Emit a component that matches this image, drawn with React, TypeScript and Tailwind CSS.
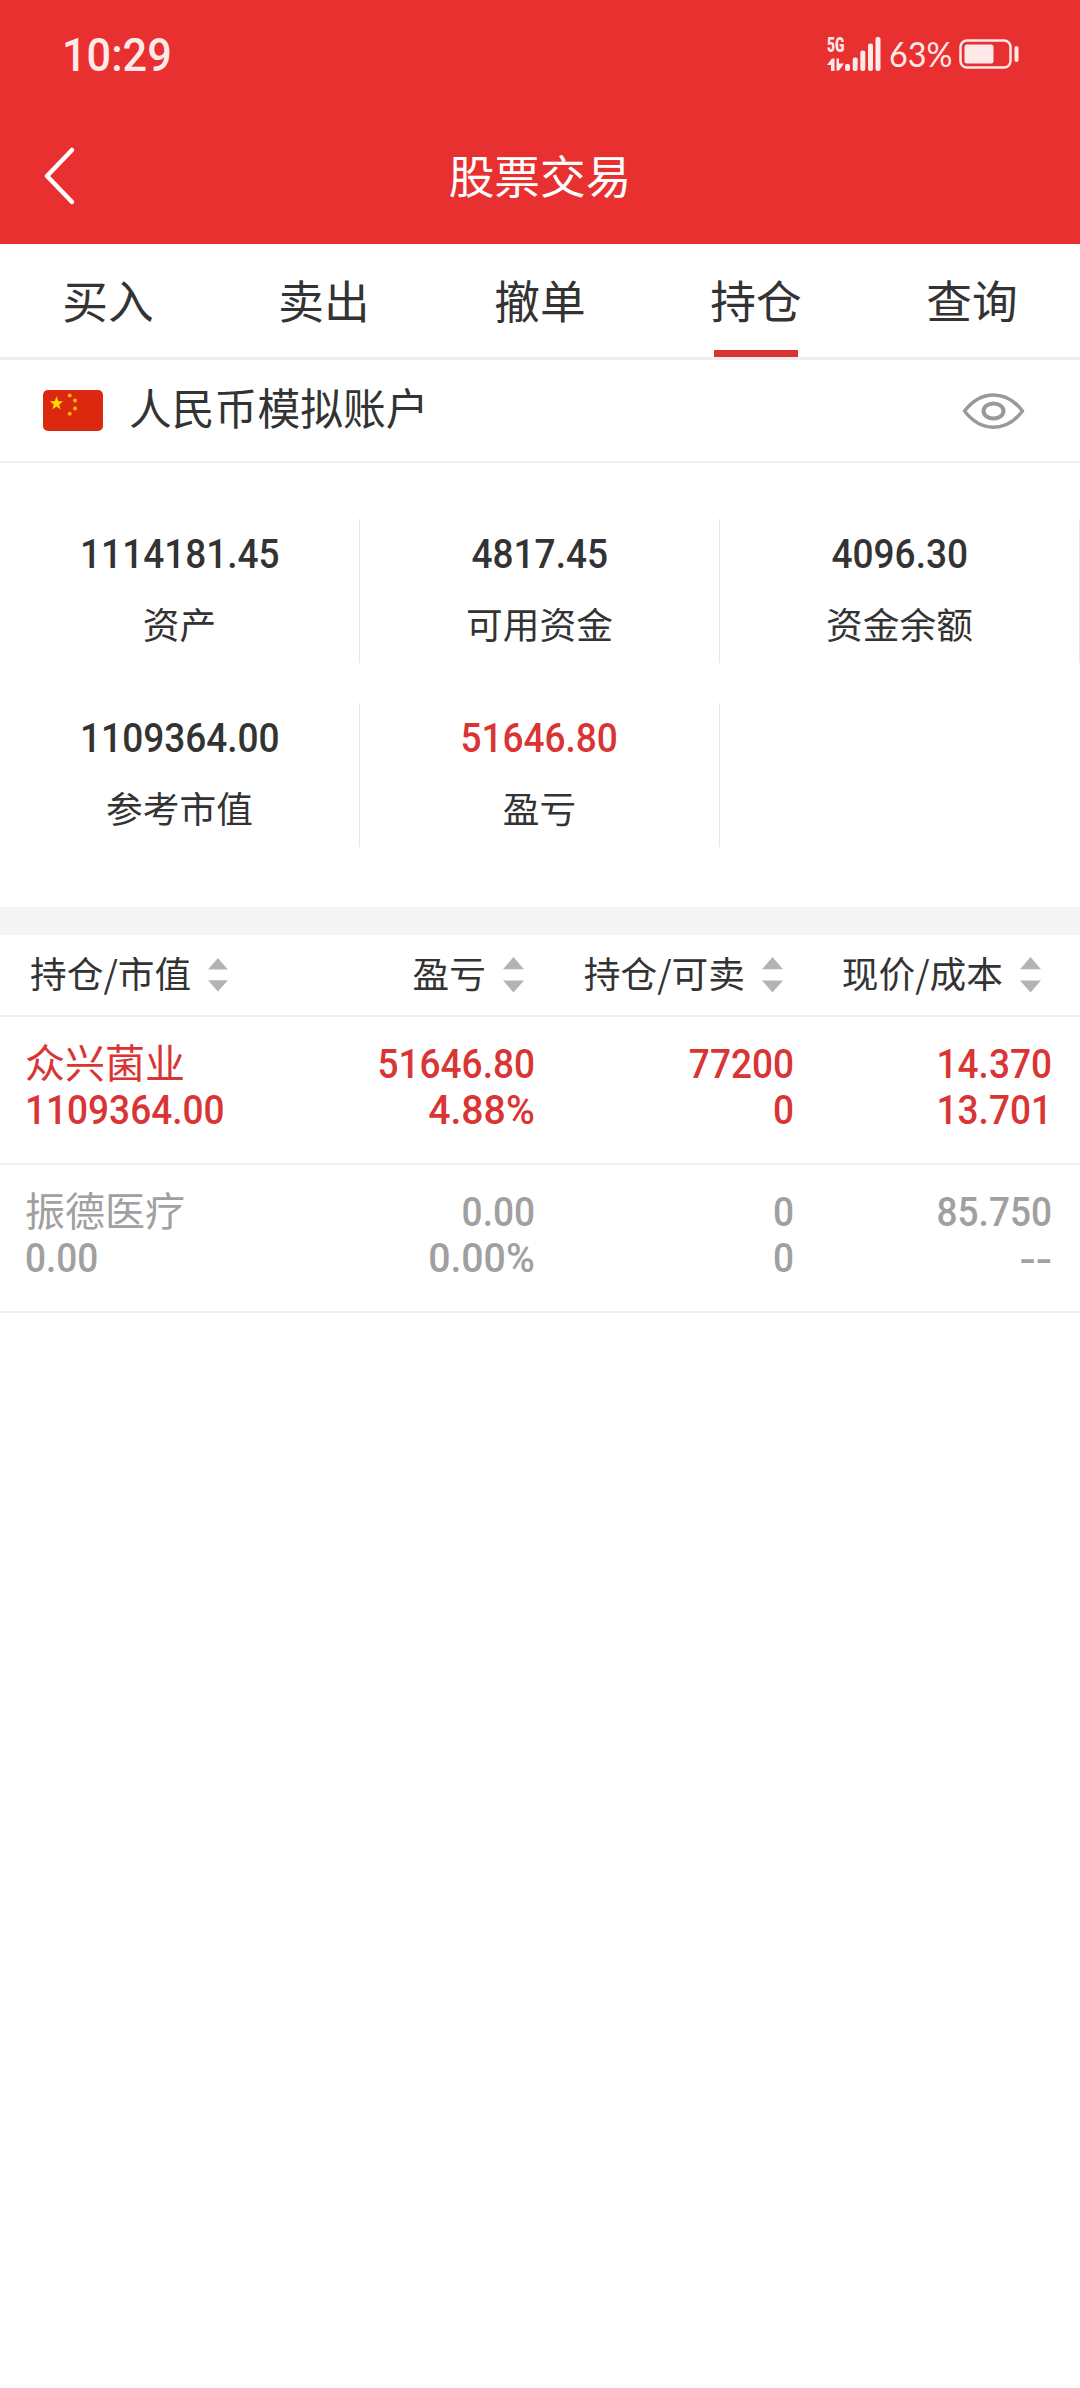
const tabs = ["买入", "卖出", "撤单", "持仓", "查询"];

const summary = [
  { value: "1114181.45", label: "资产" },
  { value: "4817.45", label: "可用资金" },
  { value: "4096.30", label: "资金余额" },
  { value: "1109364.00", label: "参考市值" },
  { value: "51646.80", label: "盈亏", up: true },
];

const columns = [
  { title: "持仓/市值", className: "w-[228px] pl-[30px] justify-between" },
  { title: "盈亏", className: "w-[296px] justify-end" },
  { title: "持仓/可卖", className: "w-[259px] justify-end" },
  { title: "现价/成本", className: "w-[258px] justify-end" },
];

const holdings = [
  { name: "众兴菌业", value: "1109364.00", profit: "51646.80", rate: "4.88%", amount: "77200", sellable: "0", price: "14.370", cost: "13.701", color: "text-[#d93535]" },
  { name: "振德医疗", value: "0.00", profit: "0.00", rate: "0.00%", amount: "0", sellable: "0", price: "85.750", cost: "--", color: "text-[#a0a0a0]" },
];

const digits = "font-['Roboto',sans-serif] font-medium scale-x-[0.925]";

function StatusBar() {
  return (
    <div className="flex h-[108px] items-center justify-between pl-[62px] pr-[61px] text-[#ffe8e8]">
      <span className="origin-left scale-x-[0.92] pt-[2px] font-['Roboto',sans-serif] text-[47px] leading-[56px] font-medium">10:29</span>
      <div className="flex h-[36px] items-center">
        <div className="flex h-[34px] w-[18px] flex-col justify-between">
          <span className="origin-left scale-x-[0.66] font-['Roboto',sans-serif] text-[21px] leading-[16px] font-black">5G</span>
          <svg width="18" height="13" viewBox="0 0 18 13" fill="currentColor">
            <path d="M0 7 5 .500h2.500V13H4V7z" />
            <path d="M9.500 .500H12V5.500h5L12 12.500H9.500z" />
          </svg>
        </div>
        <svg width="36" height="34" viewBox="0 0 36 34" fill="currentColor">
          <rect x="0" y="27" width="5" height="7" rx="2" />
          <rect x="7.700" y="20.500" width="5" height="13.500" rx="2" />
          <rect x="15.300" y="13.500" width="5" height="20.500" rx="2" />
          <rect x="23" y="6.500" width="5" height="27.500" rx="2" />
          <rect x="30.500" y="0" width="5" height="34" rx="2" />
        </svg>
        <span className="ml-[8px] w-[70px] origin-left scale-x-[0.95] font-['Lato',sans-serif] text-[34px] leading-[36px]">63%</span>
        <svg width="60" height="30" viewBox="0 0 60 30" fill="none">
          <rect x="1.500" y="1.500" width="50" height="27" rx="6.500" stroke="currentColor" strokeWidth="2.500" />
          <rect x="5.500" y="5.500" width="29" height="19" rx="2.500" fill="currentColor" />
          <rect x="55.500" y="7" width="4" height="16" rx="2" fill="currentColor" />
        </svg>
      </div>
    </div>
  );
}

function Flag() {
  return (
    <svg width="60" height="41" viewBox="0 0 60 41">
      <rect width="60" height="41" rx="5" fill="#dd2810" />
      <path fill="#ffde00" d="M13.500 6.300 15.200 11.300 20.200 11.300 16.200 14.500 17.600 19.400 13.500 16.500 9.400 19.400 10.800 14.500 6.800 11.300 11.800 11.300z" />
      <g fill="#f9b208">
        <circle cx="26.700" cy="5.500" r="2" />
        <circle cx="32" cy="10.500" r="2" />
        <circle cx="32" cy="18.500" r="2" />
        <circle cx="26.700" cy="23.800" r="2" />
      </g>
    </svg>
  );
}

function SortIcon() {
  return (
    <svg width="21" height="36" viewBox="0 0 21 36" fill="#b3b3b3">
      <path d="M0 12.200 10.500 0 21 12.200z" />
      <path d="M0 23.500 10.500 35.500 21 23.500z" />
    </svg>
  );
}

export default function App() {
  return (
    <div className="min-h-[2388px] w-[1080px] bg-white font-['Noto_Sans_CJK_SC',sans-serif] text-[#333]">
      <header className="h-[244px] bg-[#e83030] text-white">
        <StatusBar />
        <div className="grid h-[136px] grid-cols-[1fr_auto_1fr] items-center">
          <svg className="ml-[43px]" width="34" height="60" viewBox="0 0 34 60" fill="none" stroke="currentColor" strokeWidth="4.500" strokeLinecap="round" strokeLinejoin="round">
            <path d="M29 4 4 30 29 56" />
          </svg>
          <h1 className="pb-[4px] text-[45.700px] leading-[60px]">股票交易</h1>
        </div>
      </header>

      <nav className="grid h-[116px] grid-cols-5 border-b-3 border-[#ededed]">
        {tabs.map((tab) => (
          <div key={tab} className="flex flex-col items-center justify-between pt-[25px]">
            <span className="text-[45.700px] leading-[60px]">{tab}</span>
            {tab === "持仓" && <span className="h-[7px] w-[84px] bg-[#d93333]" />}
          </div>
        ))}
      </nav>

      <section className="flex h-[103px] items-center border-b-2 border-[#f0f0f0] pl-[43px] pr-[54px]">
        <Flag />
        <span className="ml-[26px] flex-1 pb-[9px] text-[42.800px] leading-[60px]">人民币模拟账户</span>
        <svg width="64" height="36" viewBox="0 0 64 36" fill="none" stroke="#999" strokeWidth="3.500">
          <path d="M2.500 18C19-3.500 44-3.500 60.500 18 44 39.500 19 39.500 2.500 18z" strokeLinejoin="round" />
          <ellipse cx="31.500" cy="18" rx="10" ry="7.500" strokeWidth="4" />
        </svg>
      </section>

      <section className="grid h-[444px] grid-cols-3 content-start gap-y-[40px] pt-[56px]">
        {summary.map((s) => (
          <div key={s.label} className="flex h-[144px] flex-col items-center border-r border-[#e6e6e6] pt-[11px]">
            <span className={`${digits} text-[40px] leading-[50px] ${s.up ? "text-[#d93535]" : ""}`}>{s.value}</span>
            <span className="mt-[18px] text-[36.700px] leading-[50px]">{s.label}</span>
          </div>
        ))}
      </section>

      <div className="h-[28px] bg-[#f4f4f4]" />

      <div className="flex h-[82px] items-center border-b-2 border-[#f0f0f0] pb-[1px]">
        {columns.map((c) => (
          <div key={c.title} className={`flex items-center gap-[17px] whitespace-nowrap ${c.className}`}>
            <span className="pb-[6px] text-[36.700px] leading-[50px]">{c.title}</span>
            <SortIcon />
          </div>
        ))}
      </div>

      {holdings.map((h) => (
        <div key={h.name} className={`flex h-[148px] border-b-2 border-[#f0f0f0] pt-[25px] pl-[25px] text-[40px] leading-[46px] ${h.color}`}>
          <div className="flex w-[220px] flex-col">
            <span className="mb-[8px] leading-[38px]">{h.name}</span>
            <span className={`origin-left ${digits}`}>{h.value}</span>
          </div>
          <div className={`flex w-[290px] origin-right flex-col items-end ${digits}`}>
            <span>{h.profit}</span>
            <span className="origin-right scale-x-[1.06]">{h.rate}</span>
          </div>
          <div className={`flex w-[259px] origin-right flex-col items-end ${digits}`}>
            <span>{h.amount}</span>
            <span>{h.sellable}</span>
          </div>
          <div className={`flex w-[258px] origin-right flex-col items-end ${digits}`}>
            <span>{h.price}</span>
            <span className={h.cost === "--" ? "origin-right translate-y-[2px] scale-x-[1.3]" : ""}>{h.cost}</span>
          </div>
        </div>
      ))}
    </div>
  );
}
